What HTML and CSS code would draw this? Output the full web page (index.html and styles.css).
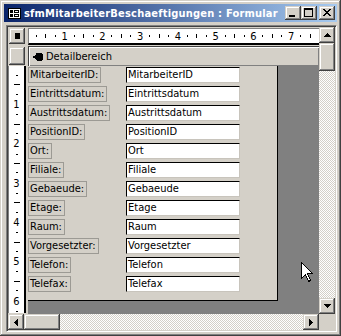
FILE: index.html
```html
<!DOCTYPE html>
<html lang="de">
<head>
  <meta charset="UTF-8">
  <title>sfmMitarbeiterBeschaeftigungen : Formular</title>
  <link rel="stylesheet" href="styles.css">
</head>
<body>
  <div class="window">
    <div class="titlebar">
      <svg class="app-icon" width="13" height="11" viewBox="0 0 13 11" shape-rendering="crispEdges">
        <rect x="0.5" y="0.5" width="12" height="10" fill="#fff" stroke="#000"/>
        <rect x="2" y="2" width="3" height="3" fill="#000"/>
        <rect x="6.5" y="2.5" width="4" height="2" fill="none" stroke="#000"/>
        <rect x="2" y="6" width="3" height="3" fill="#000"/>
        <rect x="6.5" y="6.5" width="4" height="2" fill="none" stroke="#000"/>
      </svg>
      <span class="title">sfmMitarbeiterBeschaeftigungen : Formular</span>
      <div class="caption-buttons">
        <span class="cap-btn raised">
          <svg width="16" height="14" viewBox="0 0 16 14" shape-rendering="crispEdges"><rect x="4" y="9" width="6" height="2" fill="#000"/></svg>
        </span>
        <span class="cap-btn raised">
          <svg width="16" height="14" viewBox="0 0 16 14" shape-rendering="crispEdges">
            <rect x="3" y="2" width="9" height="2" fill="#000"/>
            <rect x="3" y="4" width="1" height="7" fill="#000"/>
            <rect x="11" y="4" width="1" height="7" fill="#000"/>
            <rect x="3" y="10" width="9" height="1" fill="#000"/>
          </svg>
        </span>
        <span class="cap-btn raised close">
          <svg width="16" height="14" viewBox="0 0 16 14" shape-rendering="crispEdges" fill="#000">
            <rect x="4" y="3" width="2" height="1"/><rect x="10" y="3" width="2" height="1"/>
            <rect x="5" y="4" width="2" height="1"/><rect x="9" y="4" width="2" height="1"/>
            <rect x="6" y="5" width="4" height="1"/>
            <rect x="7" y="6" width="2" height="1"/>
            <rect x="6" y="7" width="4" height="1"/>
            <rect x="5" y="8" width="2" height="1"/><rect x="9" y="8" width="2" height="1"/>
            <rect x="4" y="9" width="2" height="1"/><rect x="10" y="9" width="2" height="1"/>
          </svg>
        </span>
      </div>
    </div>

    <div class="client">
      <div class="corner"><span class="raised select-all"><i></i></span></div>

      <div class="hruler">
        <div class="hruler-strip">
          <span class="dot"></span><span class="tick"></span><span class="dot"></span><span>1</span>
          <span class="dot"></span><span class="tick"></span><span class="dot"></span><span>2</span>
          <span class="dot"></span><span class="tick"></span><span class="dot"></span><span>3</span>
          <span class="dot"></span><span class="tick"></span><span class="dot"></span><span>4</span>
          <span class="dot"></span><span class="tick"></span><span class="dot"></span><span>5</span>
          <span class="dot"></span><span class="tick"></span><span class="dot"></span><span>6</span>
          <span class="dot"></span><span class="tick"></span><span class="dot"></span><span>7</span>
          <span class="dot"></span><span class="tick"></span><span class="dot"></span>
        </div>
      </div>

      <div class="vscroll">
        <span class="sb-btn raised"><svg width="7" height="4" viewBox="0 0 7 4" shape-rendering="crispEdges"><path d="M3 0h1v1h1v1h1v1h1v1H0V3h1V2h1V1h1z"/></svg></span>
        <span class="sb-thumb raised"></span>
        <span class="sb-track"></span>
        <span class="sb-btn raised"><svg width="7" height="4" viewBox="0 0 7 4" shape-rendering="crispEdges"><path d="M0 0h7v1H6v1H5v1H4v1H3V3H2V2H1V1H0z"/></svg></span>
      </div>

      <div class="section-sel"><span class="raised"></span></div>

      <div class="section-bar">
        <svg class="section-icon" width="10" height="8" viewBox="0 0 10 8" shape-rendering="crispEdges">
          <path d="M3 0h6v1h1v6H9v1H4V7H3V6H2V5H0V3h2V2h1z"/>
        </svg>
        <span>Detailbereich</span>
      </div>

      <div class="vruler">
        <div class="vruler-strip">
          <span class="short"></span><span class="long"></span><span class="short"></span><span>1</span>
          <span class="short"></span><span class="long"></span><span class="short"></span><span>2</span>
          <span class="short"></span><span class="long"></span><span class="short"></span><span>3</span>
          <span class="short"></span><span class="long"></span><span class="short"></span><span>4</span>
          <span class="short"></span><span class="long"></span><span class="short"></span><span>5</span>
          <span class="short"></span><span class="long"></span><span class="short"></span><span>6</span>
          <span class="short"></span><span class="long"></span><span class="short"></span>
        </div>
      </div>

      <div class="surface">
        <div class="form">
          <span class="label">MitarbeiterID:</span><span class="textbox">MitarbeiterID</span>
          <span class="label">Eintrittsdatum:</span><span class="textbox">Eintrittsdatum</span>
          <span class="label">Austrittsdatum:</span><span class="textbox">Austrittsdatum</span>
          <span class="label">PositionID:</span><span class="textbox">PositionID</span>
          <span class="label">Ort:</span><span class="textbox">Ort</span>
          <span class="label">Filiale:</span><span class="textbox">Filiale</span>
          <span class="label">Gebaeude:</span><span class="textbox">Gebaeude</span>
          <span class="label">Etage:</span><span class="textbox">Etage</span>
          <span class="label">Raum:</span><span class="textbox">Raum</span>
          <span class="label">Vorgesetzter:</span><span class="textbox">Vorgesetzter</span>
          <span class="label">Telefon:</span><span class="textbox">Telefon</span>
          <span class="label">Telefax:</span><span class="textbox">Telefax</span>
        </div>
      </div>

      <div class="hscroll">
        <span class="sb-btn raised"><svg width="4" height="7" viewBox="0 0 4 7" shape-rendering="crispEdges"><path d="M3 0h1v7H3V6H2V5H1V4H0V3h1V2h1V1h1z"/></svg></span>
        <span class="sb-thumb raised"></span>
        <span class="sb-track"></span>
        <span class="sb-btn raised"><svg width="4" height="7" viewBox="0 0 4 7" shape-rendering="crispEdges"><path d="M0 0h1v1h1v1h1v1h1v1H3v1H2v1H1v1H0z"/></svg></span>
      </div>

      <div class="sizer"></div>
    </div>
  </div>

  <!-- mouse pointer over the design surface -->
  <svg class="cursor" width="13" height="21" viewBox="0 0 13 21" shape-rendering="crispEdges">
    <path d="M0.5 0.5V16.5L4.5 12.5L7.5 19.5L9.5 18.5L6.5 11.5H11.5Z" fill="#fff" stroke="#000"/>
  </svg>
</body>
</html>
```

FILE: styles.css
```css
* {
  box-sizing: border-box;
  margin: 0;
  padding: 0;
}

body {
  width: 341px;
  height: 336px;
  overflow: hidden;
  position: relative;
  background: #d4d0c8;
  font-family: "DejaVu Sans Condensed", "Liberation Sans", sans-serif;
  font-size: 11px;
  color: #000;
}

.raised {
  display: block;
  background: #d4d0c8;
  box-shadow: inset -1px -1px #404040, inset 1px 1px #d4d0c8, inset -2px -2px #808080, inset 2px 2px #fff;
}

/* window frame */
.window {
  width: 341px;
  height: 336px;
  padding: 4px;
  background: #d4d0c8;
  box-shadow: inset -1px -1px #404040, inset 1px 1px #d4d0c8, inset -2px -2px #808080, inset 2px 2px #fff;
}

.titlebar {
  height: 18px;
  display: flex;
  align-items: center;
  padding-left: 4px;
  background: linear-gradient(to right, #0a246a, #a6caf0);
  color: #fff;
}

.app-icon {
  flex: none;
}

.title {
  margin-left: 3px;
  font-weight: bold;
  letter-spacing: 0.2px;
  white-space: nowrap;
}

.caption-buttons {
  display: flex;
  margin-left: auto;
  margin-right: 2px;
}

.cap-btn {
  width: 16px;
  height: 14px;
}

.cap-btn svg {
  display: block;
}

.cap-btn.close {
  margin-left: 2px;
}

/* client area */
.client {
  margin: 3px 0 0 2px;
  width: 331px;
  height: 307px;
  padding: 1px;
  border: 1px solid;
  border-color: #808080 #fff #fff #808080;
  box-shadow: inset 1px 1px #404040, inset -1px -1px #d4d0c8;
  display: grid;
  grid-template-columns: 20px 291px 16px;
  grid-template-rows: 19px 20px 248px 16px;
}

.corner {
  padding: 1px 0 0 1px;
}

.select-all {
  width: 16px;
  height: 16px;
  display: flex;
  align-items: center;
  justify-content: center;
}

.select-all i {
  width: 5px;
  height: 6px;
  background: #000;
}

/* rulers */
.hruler {
  padding-top: 1px;
}

.hruler-strip {
  height: 17px;
  display: flex;
  align-items: center;
  padding-left: 2.7px;
  overflow: hidden;
  background: #fff;
  border-top: 1px solid #808080;
  border-left: 1px solid #808080;
  border-bottom: 2px solid #000;
  font-size: 11px;
  line-height: 1;
}

.hruler-strip span {
  flex: 0 0 9.45px;
  display: flex;
  justify-content: center;
  align-items: center;
}

.hruler-strip .dot::before,
.hruler-strip .tick::before,
.vruler-strip .short::before,
.vruler-strip .long::before {
  content: "";
  display: block;
  background: #000;
}

.hruler-strip .dot::before {
  width: 1px;
  height: 2px;
}

.hruler-strip .tick::before {
  width: 1px;
  height: 4px;
}

.vruler {
  padding: 0 2px 1px 0;
}

.vruler-strip {
  height: 100%;
  display: flex;
  flex-direction: column;
  padding-top: 4.7px;
  overflow: hidden;
  background: #fff;
  border-left: 1px solid #808080;
  border-right: 2px solid #000;
  font-size: 11px;
  line-height: 1;
}

.vruler-strip span {
  flex: 0 0 9.45px;
  display: flex;
  justify-content: center;
  align-items: center;
}

.vruler-strip .short::before {
  width: 2px;
  height: 1px;
}

.vruler-strip .long::before {
  width: 6px;
  height: 1px;
}

/* section header */
.section-sel {
  padding: 1px 0 0 1px;
}

.section-sel .raised {
  width: 16px;
  height: 18px;
}

.section-bar {
  display: flex;
  align-items: center;
  padding-left: 4px;
  border-top: 1px solid #404040;
  border-left: 1px solid #404040;
  box-shadow: inset 1px 1px #fff, inset -1px -1px #808080;
}

.section-icon {
  margin-right: 3px;
}

/* design surface */
.surface {
  background: #808080;
}

.form {
  width: 250px;
  height: 235px;
  padding-top: 1px;
  background: #d4d0c8;
  border-right: 1px solid #000;
  border-bottom: 1px solid #000;
  display: grid;
  grid-template-columns: 98px 114px;
  grid-auto-rows: 16px;
  row-gap: 3px;
}

.label {
  justify-self: start;
  padding: 0 2px 0 1px;
  border: 1px solid #9c9a94;
  line-height: 14px;
  white-space: nowrap;
}

.textbox {
  padding-left: 1px;
  background: #fff;
  border: 1px solid;
  border-color: #000 #c8c4bc #c8c4bc #000;
  line-height: 14px;
  white-space: nowrap;
}

/* scrollbars */
.vscroll {
  grid-row: 1 / 4;
  grid-column: 3;
  display: flex;
  flex-direction: column;
}

.hscroll {
  grid-column: 1 / 3;
  display: flex;
}

.sb-btn {
  flex: 0 0 16px;
  display: flex;
  align-items: center;
  justify-content: center;
}

.sb-btn svg {
  display: block;
}

.vscroll .sb-thumb {
  flex: 0 0 28px;
}

.hscroll .sb-thumb {
  flex: 0 0 36px;
}

.sb-track {
  flex: 1;
  background: repeating-conic-gradient(#fff 0 25%, #d4d0c8 0 50%) 0 0 / 2px 2px;
}

.sizer {
  background: #d4d0c8;
}

.cursor {
  position: absolute;
  left: 301px;
  top: 262px;
}
```
